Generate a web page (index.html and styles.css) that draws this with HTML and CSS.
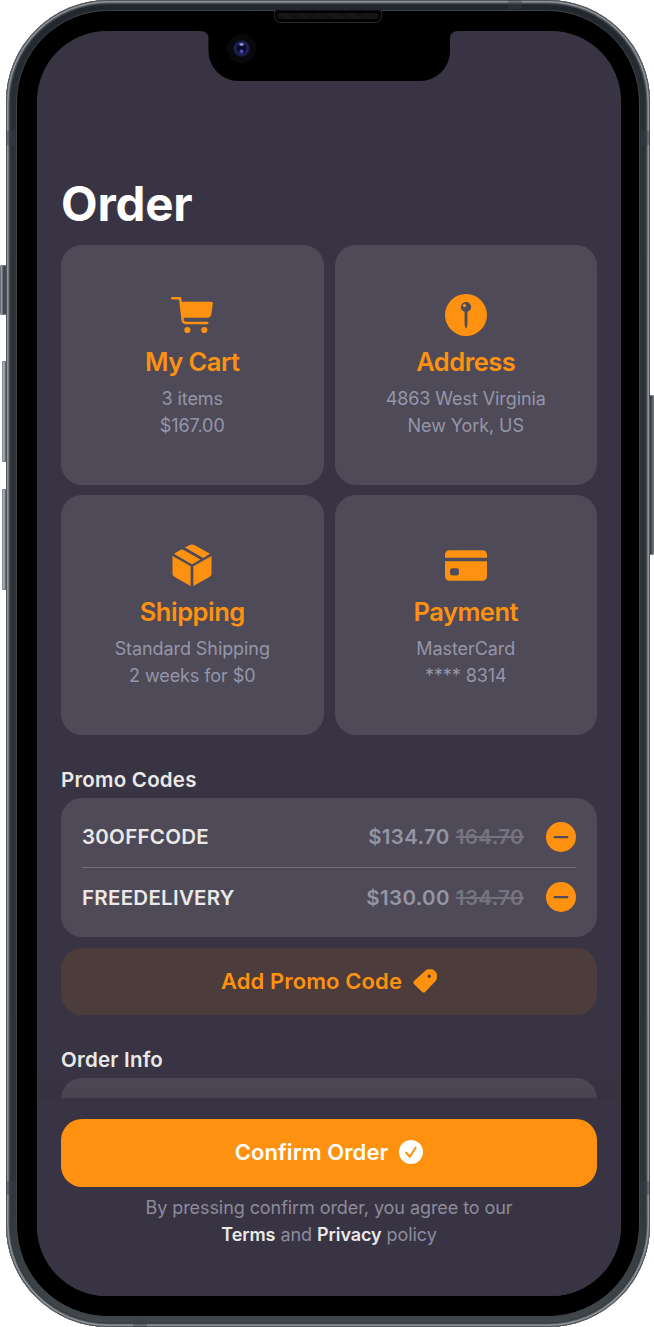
FILE: index.html
```html
<!DOCTYPE html>
<html lang="en">
<head>
<meta charset="utf-8">
<title>Order</title>
<link rel="stylesheet" href="styles.css">
</head>
<body>
<div class="device">
  <span class="key key-mute"></span>
  <span class="key key-up"></span>
  <span class="key key-down"></span>
  <span class="key key-power"></span>
  <div class="frame">
    <span class="band band-top"></span>
    <span class="band band-bottom"></span>
    <span class="band band-side band-left-top"></span>
    <span class="band band-side band-left-bottom"></span>
    <span class="band band-side band-right-top"></span>
    <span class="band band-side band-right-bottom"></span>
    <div class="bezel">
      <main class="screen">
        <div class="content">
          <h1 class="page-title">Order</h1>
          <section class="cards">
            <article class="card">
              <svg class="card-icon" viewBox="0 0 42 42"><path d="M1.2 4.3H9.1L11.7 26.2Q12.1 29 14.6 29H36.3" fill="none" stroke="currentColor" stroke-width="2.4" stroke-linecap="round" stroke-linejoin="round"/><path d="M9.5 7.8H40.2Q42 7.8 41.8 9.5L40.4 20Q39.9 23.7 36.5 23.7H11.5Z" fill="currentColor"/><circle cx="16.4" cy="36" r="3.1" fill="currentColor"/><circle cx="33.3" cy="36" r="3.1" fill="currentColor"/></svg>
              <h2 class="card-title">My Cart</h2>
              <p class="card-text">3 items</p>
              <p class="card-text">$167.00</p>
            </article>
            <article class="card">
              <svg class="card-icon" viewBox="0 0 42 42"><circle cx="21" cy="21" r="21" fill="currentColor"/><circle class="cut" cx="21" cy="13" r="5.1"/><path class="cut" d="M19.6 17H22.4V30.5L21.5 34Q21 34.7 20.5 34L19.6 30.5Z"/><circle cx="19.5" cy="11.7" r="1.6" fill="currentColor"/></svg>
              <h2 class="card-title">Address</h2>
              <p class="card-text">4863 West Virginia</p>
              <p class="card-text">New York, US</p>
            </article>
            <article class="card">
              <svg class="card-icon" viewBox="0 0 42 42"><g fill="currentColor"><path d="M1.5 12.1L19.6 22.3V42L3.4 32.8Q1.5 31.7 1.5 29.5Z"/><path d="M40.5 12.1L22.4 22.3V42L38.6 32.8Q40.5 31.7 40.5 29.5Z"/><path d="M3 9.8L9.8 5.8Q11 5.1 12.2 5.8L29.3 15.6L22.2 19.7Q21 20.4 19.8 19.7Z"/><path d="M14 3.6L18.2 1.2Q21 -.4 23.8 1.2L39 9.8L32.2 13.9Z"/></g></svg>
              <h2 class="card-title">Shipping</h2>
              <p class="card-text">Standard Shipping</p>
              <p class="card-text">2 weeks for $0</p>
            </article>
            <article class="card">
              <svg class="card-icon" viewBox="0 0 42 42"><path d="M0 13.7V11Q0 6.2 4.8 6.2H37.2Q42 6.2 42 11V13.7ZM0 17.2H42V32Q42 36.8 37.2 36.8H4.8Q0 36.8 0 32Z" fill="currentColor"/><rect class="cut" x="5.1" y="24.2" width="8.8" height="7.2" rx="1.8"/></svg>
              <h2 class="card-title">Payment</h2>
              <p class="card-text">MasterCard</p>
              <p class="card-text">**** 8314</p>
            </article>
          </section>
          <h3 class="section-title">Promo Codes</h3>
          <ul class="promos">
            <li class="promo">
              <span class="promo-name">30OFFCODE</span>
              <span class="promo-price">$134.70</span>
              <s class="promo-old">164.70</s>
              <svg class="remove" viewBox="0 0 30 30"><circle cx="15" cy="15" r="15" fill="currentColor"/><rect class="cut" x="7.5" y="13.9" width="15" height="2.4" rx="1.2"/></svg>
            </li>
            <li class="promo">
              <span class="promo-name">FREEDELIVERY</span>
              <span class="promo-price">$130.00</span>
              <s class="promo-old">134.70</s>
              <svg class="remove" viewBox="0 0 30 30"><circle cx="15" cy="15" r="15" fill="currentColor"/><rect class="cut" x="7.5" y="13.9" width="15" height="2.4" rx="1.2"/></svg>
            </li>
          </ul>
          <button class="button button-soft"><span>Add Promo Code</span>
            <svg class="button-icon" viewBox="0 0 24 24"><path fill="currentColor" fill-rule="evenodd" d="M12.6 1.4Q13.8 .3 15.4 .3H18.6Q20 .3 21 1.3L22.9 3.2Q23.9 4.2 23.9 5.6V9.1Q23.9 10.8 22.7 11.9L12.4 22.7Q10.7 24.5 8.9 22.7L1.2 15.2Q-.5 13.4 1.3 11.7ZM17.9 7.2a1.7 1.7 0 1 0-3.4 0a1.7 1.7 0 1 0 3.4 0Z"/></svg>
          </button>
          <h3 class="section-title">Order Info</h3>
          <div class="info"></div>
        </div>
        <footer class="footer">
          <button class="button button-main"><span>Confirm Order</span>
            <svg class="button-icon" viewBox="0 0 24 24"><circle cx="12" cy="12" r="12" fill="currentColor"/><path class="tick" d="M7.2 12.8L10.8 16.7L16.6 7.7"/></svg>
          </button>
          <p class="legal legal-first">By pressing confirm order, you agree to our</p>
          <p class="legal"><b>Terms</b> and <b>Privacy</b> policy</p>
        </footer>
      </main>
      <svg class="notch" viewBox="0 0 258 52"><path d="M0 0V1Q8.5 1 8.5 9V21A30 30 0 0 0 38.5 51H220A30 30 0 0 0 250 21V9Q250 1 258 1V0Z"/></svg>
      <span class="speaker"></span>
      <span class="camera"></span>
    </div>
  </div>
</div>
</body>
</html>
```
FILE: styles.css
```css
* { box-sizing: border-box; margin: 0; padding: 0; }
body { width: 654px; height: 1327px; background: #fff; font-family: Inter, "Liberation Sans", sans-serif; overflow: hidden; }
.device { position: relative; width: 654px; height: 1327px; padding: 0 4px 0 5.5px; }
.frame {
  position: relative; height: 1326.5px; padding: 10px; border-radius: 102px;
  background: linear-gradient(#20262b, #2d3237 12%, #2d3237 88%, #42474a);
  box-shadow: inset 0 0 0 1px #4f545a, inset 0 0 0 2.5px #8f9396, inset 0 0 0 3.5px #555a60, inset 0 0 0 4.5px #34393f;
}
.bezel { position: relative; height: 100%; padding: 20px 18px 20px 20.5px; border: 1px solid #414447; border-radius: 92px; background: #000; }
.screen { height: 100%; display: flex; flex-direction: column; border-radius: 70px; background: #393443; overflow: hidden; }
.content { height: 1067px; padding: 147px 24px 0; overflow: hidden; position: relative; }
.content::after { content: ""; position: absolute; left: 0; right: 0; bottom: 0; height: 26px; background: linear-gradient(rgba(47, 42, 55, 0), rgba(47, 42, 55, .22)); }

.page-title { height: 67px; font-size: 47.5px; line-height: 52px; font-weight: 700; color: #fff; letter-spacing: -.2px; }
.cards { display: grid; grid-template-columns: 1fr 1fr; gap: 10.5px 11px; }
.card { height: 239.75px; padding-top: 49px; display: flex; flex-direction: column; align-items: center; border-radius: 21px; background: #4f4a57; }
.card-icon { width: 42px; height: 42px; color: #fe9210; overflow: visible; }
.cut { fill: #4f4a57; }
.card-title { margin: 10px 0 6.6px; font-size: 25.5px; line-height: 32px; font-weight: 570; letter-spacing: -.5px; color: #fe9210; }
.card-text { font-size: 18px; line-height: 27px; letter-spacing: -.08px; color: #9496aa; }
.section-title { margin-top: 31px; height: 31.5px; font-size: 20.5px; line-height: 28px; font-weight: 560; letter-spacing: .22px; color: #ebe9e7; }
.promos { height: 139.5px; padding: 9px 21px; list-style: none; border-radius: 21px; background: #4f4a57; }
.promo { height: 60px; display: flex; align-items: center; font-size: 20.5px; line-height: 24px; font-weight: 560; letter-spacing: .27px; color: #ebe9e7; }
.promo > span, .promo > s { padding-top: 1px; }
.promo + .promo { border-top: 1px solid #737078; }
.promo-name { flex: 1; }
.promo-price { color: #9496a6; letter-spacing: .35px; }
.promo-old { margin: 0 22px 0 6px; color: #757480; letter-spacing: .4px; text-decoration-thickness: 1.5px; }
.remove { width: 30px; height: 30px; color: #fe9210; }
.button { width: 100%; height: 67.5px; padding-bottom: 1px; display: flex; align-items: center; justify-content: center; gap: 11px; border: 0; border-radius: 21px; font: 570 22px/28px Inter, "Liberation Sans", sans-serif; letter-spacing: .1px; }
.button-soft { margin-top: 10.5px; background: #4d3c3c; color: #fe9210; }
.button-icon { width: 24px; height: 24px; }
.button-main { background: #fe9210; color: #fff; }
.tick { fill: none; stroke: #fe9210; stroke-width: 2.1; stroke-linecap: round; stroke-linejoin: round; }
.info { height: 120px; border-radius: 21px; background: #4f4a57; }
.footer { flex: 1; padding: 21px 24px 0; background: #393443; }
.legal { font-size: 18px; line-height: 26.5px; text-align: center; letter-spacing: -.07px; color: #8d8c9c; }
.legal-first { margin-top: 8.5px; }
.legal b { font-weight: 600; color: #ebe9e7; }

/* Hardware details lying over the case */
.notch { position: absolute; left: 183.5px; top: 19px; width: 258px; height: 52px; }
.speaker { position: absolute; left: 257px; top: -1px; width: 108px; height: 13px; border: 1px solid #292929; border-top-color: #111; border-radius: 3px 3px 7px 7px; background: #000; }
.speaker::after { content: ""; position: absolute; inset: 2px 2px 3px; border-radius: 4px; background: repeating-linear-gradient(45deg, #101010 0 1px, #1b1b1b 1px 2px); }
.camera { position: absolute; left: 210px; top: 23px; width: 29px; height: 29px; border-radius: 50%; background:
  radial-gradient(ellipse 3px 1.8px at 50% 36%, #aaa0dc 40%, transparent),
  radial-gradient(circle 2.6px at 50% 60%, #367bb5 25%, #4a1d92 65%, transparent),
  radial-gradient(circle at center, #0b0b27 0 4px, #22225f 6px, #17173f 7.5px, #08080a 9px); }
.key { position: absolute; width: 5px; background: linear-gradient(90deg, #70767b, #b4b9bc 35%, #22272b); border-radius: 2px 0 0 2px; box-shadow: inset 0 1px #777c82, inset 0 -1px #777c82; }
.key-mute { left: 0; top: 265px; width: 6px; height: 50px; background: linear-gradient(90deg, #555d67, #a1a7ad 30%, #424953 50%); }
.key-up { left: 1.5px; top: 361px; height: 101px; }
.key-down { left: 1.5px; top: 489px; height: 101px; }
.key-power { right: 0; top: 395px; height: 160px; border-radius: 0 2px 2px 0; background: linear-gradient(90deg, #202529, #4e565e 60%, #7b8085); }
.band { position: absolute; width: 14px; height: 10px; background: rgba(52, 62, 72, .4); }
.band-top { left: 502px; top: 0; height: 9px; }
.band-bottom { left: 127px; bottom: 0; height: 9px; }
.band-side { width: 9px; height: 14px; }
.band-left-top { left: 0; top: 131px; }
.band-left-bottom { left: 0; top: 1181px; }
.band-right-top { right: 0; top: 131px; }
.band-right-bottom { right: 0; top: 1181px; }
```
